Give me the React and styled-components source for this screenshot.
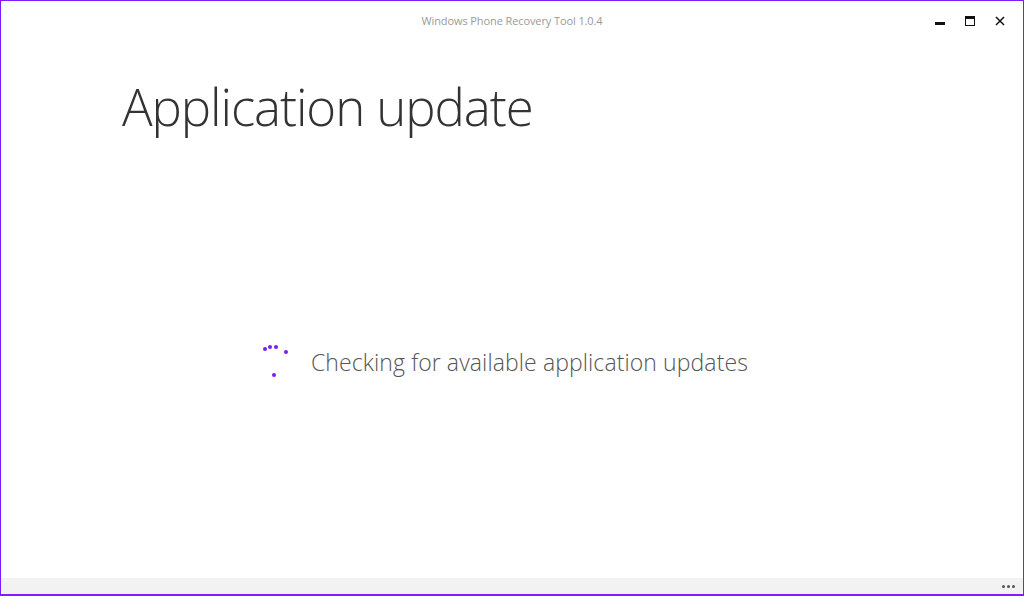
import React from "react";
import styled, { createGlobalStyle } from "styled-components";

const Global = createGlobalStyle`
	html, body {
		margin: 0;
		padding: 0;
		background: #ffffff;
	}
	body {
		font-family: "Open Sans", "Liberation Sans", sans-serif;
	}
`;

const Window = styled.div`
	box-sizing: border-box;
	width: 1024px;
	height: 596px;
	display: flex;
	flex-direction: column;
	border: 1px solid #7b1ff7;
	border-bottom-width: 2px;
	background: #ffffff;
	overflow: hidden;
`;

const TitleBar = styled.div`
	height: 40px;
	display: flex;
	align-items: center;
	position: relative;
`;

const TitleText = styled.div`
	flex: 1;
	text-align: center;
	font-size: 11px;
	color: #9a9a9a;
	margin-top: -2px;
	letter-spacing: -0.1px;
`;

const Controls = styled.div`
	position: absolute;
	right: 8px;
	top: 8px;
	display: flex;
`;

const ControlButton = styled.div`
	width: 30px;
	height: 24px;
	display: flex;
	align-items: center;
	justify-content: center;
`;

const Content = styled.div`
	flex: 1;
	display: flex;
	flex-direction: column;
	padding: 0 0 0 121px;
`;

const Heading = styled.h1`
	margin: 30px 0 0 0;
	font-weight: 300;
	font-size: 51px;
	line-height: 70px;
	color: #333333;
	letter-spacing: -1.1px;
`;

const Status = styled.div`
	display: flex;
	align-items: center;
	margin: 204px 0 0 141px;
	gap: 20px;
`;

const Spinner = styled.div`
	position: relative;
	width: 28px;
	height: 34px;
`;

const Dot = styled.span`
	position: absolute;
	width: 4px;
	height: 4px;
	border-radius: 50%;
	background: #7a1cf6;
`;

const StatusText = styled.div`
	font-weight: 300;
	font-size: 23px;
	color: #555555;
	letter-spacing: 0.1px;
`;

const Footer = styled.div`
	height: 16px;
	background: #f2f2f2;
	display: flex;
	justify-content: flex-end;
	align-items: center;
	padding-right: 8px;
	gap: 2px;
`;

const FooterDot = styled.span`
	width: 3px;
	height: 3px;
	background: #555555;
	border-radius: 50%;
`;

const dots = [
	[0, 2],
	[5, 0],
	[11, 0],
	[21, 5],
	[9, 28],
];

const App = () => {
	return (
		<>
			<Global />
			<Window>
				<TitleBar>
					<TitleText>Windows Phone Recovery Tool 1.0.4</TitleText>
					<Controls>
						<ControlButton>
							<svg width="10" height="10" viewBox="0 0 10 10">
								<rect x="0" y="6" width="10" height="3" fill="#111" />
							</svg>
						</ControlButton>
						<ControlButton>
							<svg width="10" height="10" viewBox="0 0 10 10">
								<rect x="0.5" y="0.5" width="9" height="9" fill="none" stroke="#111" />
								<rect x="0" y="0" width="10" height="3" fill="#111" />
							</svg>
						</ControlButton>
						<ControlButton>
							<svg width="10" height="10" viewBox="0 0 10 10">
								<path d="M1 1 L9 9 M9 1 L1 9" stroke="#111" strokeWidth="1.5" />
							</svg>
						</ControlButton>
					</Controls>
				</TitleBar>
				<Content>
					<Heading>Application update</Heading>
					<Status>
						<Spinner>
							{dots.map(([x, y], i) => (
								<Dot key={i} style={{ left: x, top: y }} />
							))}
						</Spinner>
						<StatusText>Checking for available application updates</StatusText>
					</Status>
				</Content>
				<Footer>
					<FooterDot />
					<FooterDot />
					<FooterDot />
				</Footer>
			</Window>
		</>
	);
};

export default App;
